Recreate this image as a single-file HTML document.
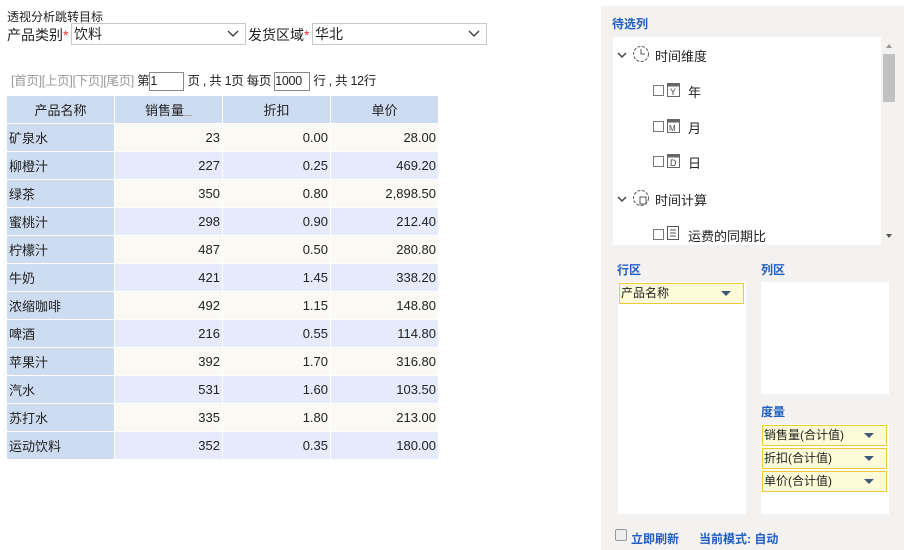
<!DOCTYPE html>
<html><head><meta charset="utf-8"><style>
*{margin:0;padding:0;box-sizing:border-box}
body{width:904px;height:550px;background:#fff;font-family:"Liberation Sans","Noto Sans CJK SC",sans-serif;font-size:13px;color:#222;position:relative;overflow:hidden}
.a{position:absolute}
.sel{position:absolute;height:22px;border:1px solid #c8c8c8;background:#fff;font-size:14px;line-height:20px;padding-left:2px}
.sel svg{position:absolute;right:6px;top:6px}
table{position:absolute;left:6px;top:95px;border-collapse:separate;border-spacing:1px;background:#fff}
td{height:27px;width:107px;font-size:13px;padding:0 2px;text-align:right;vertical-align:middle}
th{height:27px;width:107px;background:#cddcf0;font-weight:normal;font-size:13px}
td.n{background:#cddcf0;text-align:left}
tr.o td{background:#faf9f4}tr.e td{background:#e6ebfb}
tr td.n{background:#cddcf0}
.panel{position:absolute;left:601px;top:6px;width:303px;height:544px;background:#f3f2f0}
.blue{color:#1f5fc4;font-size:12px;font-weight:bold}
.box{position:absolute;background:#fff}
.chip{position:absolute;height:21px;background:#fefbd8;border:1px solid #f0c93a;font-size:12px;line-height:19px;padding-left:1px}
.tri{position:absolute;right:12px;top:7px;width:0;height:0;border-left:5px solid transparent;border-right:5px solid transparent;border-top:5px solid #3e5a7a}
.cb{position:absolute;width:11px;height:11px;border:1px solid #777;background:#fff}
.it{position:absolute;font-size:13px}
</style></head><body>
<div class="a" style="left:7px;top:8px;font-size:12px">透视分析跳转目标</div>
<div class="a" style="left:7px;top:25px;font-size:14px">产品类别<span style="color:#e33">*</span></div>
<div class="sel" style="left:71px;top:23px;width:175px">饮料<svg width="12" height="8"><path d="M1 1l5 5 5-5" stroke="#333" fill="none" stroke-width="1.3"/></svg></div>
<div class="a" style="left:248px;top:25px;font-size:14px">发货区域<span style="color:#e33">*</span></div>
<div class="sel" style="left:312px;top:23px;width:175px">华北<svg width="12" height="8"><path d="M1 1l5 5 5-5" stroke="#333" fill="none" stroke-width="1.3"/></svg></div>
<div class="a" style="left:11px;top:70px;font-size:12.5px;white-space:nowrap;letter-spacing:-0.3px"><span style="color:#999">[首页][上页][下页][尾页]</span> 第<span style="display:inline-block;width:35px;height:19px;border:1px solid #888;vertical-align:middle;line-height:17px">1</span> 页 , 共 1页 每页 <span style="display:inline-block;width:36px;height:19px;border:1px solid #888;vertical-align:middle;line-height:17px">1000</span> 行 , 共 12行</div>
<table>
<tr><th>产品名称</th><th>销售量<span style="font-size:8px;color:#aaa">▁</span></th><th>折扣</th><th>单价</th></tr>
<tr class="o"><td class="n">矿泉水</td><td>23</td><td>0.00</td><td>28.00</td></tr>
<tr class="e"><td class="n">柳橙汁</td><td>227</td><td>0.25</td><td>469.20</td></tr>
<tr class="o"><td class="n">绿茶</td><td>350</td><td>0.80</td><td>2,898.50</td></tr>
<tr class="e"><td class="n">蜜桃汁</td><td>298</td><td>0.90</td><td>212.40</td></tr>
<tr class="o"><td class="n">柠檬汁</td><td>487</td><td>0.50</td><td>280.80</td></tr>
<tr class="e"><td class="n">牛奶</td><td>421</td><td>1.45</td><td>338.20</td></tr>
<tr class="o"><td class="n">浓缩咖啡</td><td>492</td><td>1.15</td><td>148.80</td></tr>
<tr class="e"><td class="n">啤酒</td><td>216</td><td>0.55</td><td>114.80</td></tr>
<tr class="o"><td class="n">苹果汁</td><td>392</td><td>1.70</td><td>316.80</td></tr>
<tr class="e"><td class="n">汽水</td><td>531</td><td>1.60</td><td>103.50</td></tr>
<tr class="o"><td class="n">苏打水</td><td>335</td><td>1.80</td><td>213.00</td></tr>
<tr class="e"><td class="n">运动饮料</td><td>352</td><td>0.35</td><td>180.00</td></tr>
</table>
<div class="panel"></div>
<div class="a blue" style="left:612px;top:15px">待选列</div>
<div class="box" style="left:613px;top:37px;width:268px;height:208px"></div>
<div class="box" style="left:881px;top:37px;width:14px;height:208px;background:#f3f2f0"></div>
<div class="a" style="left:883px;top:54px;width:12px;height:48px;background:#c1c1c1"></div>
<div class="a" style="left:886px;top:44px;border-left:3px solid transparent;border-right:3px solid transparent;border-bottom:4px solid #999"></div>
<div class="a" style="left:886px;top:234px;border-left:3px solid transparent;border-right:3px solid transparent;border-top:4px solid #555"></div>
<svg class="a" style="left:617px;top:51px" width="10" height="8"><path d="M1 2l4 4 4-4" stroke="#444" fill="none" stroke-width="1.5"/></svg>
<svg class="a" style="left:632px;top:45px" width="18" height="18"><circle cx="9" cy="9" r="7.5" stroke="#555" fill="none" stroke-dasharray="3 1.5"/><path d="M9 4v5h4" stroke="#555" fill="none"/></svg>
<div class="it" style="left:655px;top:46px">时间维度</div>
<div class="cb" style="left:653px;top:85px"></div><svg class="a" style="left:667px;top:82px" width="13" height="15"><rect x=".5" y="1.5" width="12" height="13" fill="#fff" stroke="#666"/><rect x=".5" y="1.5" width="12" height="3" fill="#666"/><text x="3" y="13" font-size="9" font-family="Liberation Sans" fill="#444">Y</text></svg>
<div class="it" style="left:688px;top:82px">年</div>
<div class="cb" style="left:653px;top:121px"></div><svg class="a" style="left:667px;top:118px" width="13" height="15"><rect x=".5" y="1.5" width="12" height="13" fill="#fff" stroke="#666"/><rect x=".5" y="1.5" width="12" height="3" fill="#666"/><text x="2" y="13" font-size="8" font-family="Liberation Sans" fill="#444">M</text></svg>
<div class="it" style="left:688px;top:118px">月</div>
<div class="cb" style="left:653px;top:156px"></div><svg class="a" style="left:667px;top:153px" width="13" height="15"><rect x=".5" y="1.5" width="12" height="13" fill="#fff" stroke="#666"/><rect x=".5" y="1.5" width="12" height="3" fill="#666"/><text x="3" y="13" font-size="9" font-family="Liberation Sans" fill="#444">D</text></svg>
<div class="it" style="left:688px;top:153px">日</div>
<svg class="a" style="left:617px;top:195px" width="10" height="8"><path d="M1 2l4 4 4-4" stroke="#444" fill="none" stroke-width="1.5"/></svg>
<svg class="a" style="left:632px;top:189px" width="18" height="18"><circle cx="9" cy="9" r="7.5" stroke="#555" fill="none" stroke-dasharray="3 1.5"/><rect x="8" y="8" width="6" height="7" fill="#fff" stroke="#555"/></svg>
<div class="it" style="left:655px;top:190px">时间计算</div>
<div class="cb" style="left:653px;top:229px"></div><svg class="a" style="left:667px;top:226px" width="12" height="14"><rect x=".5" y=".5" width="11" height="13" fill="#fff" stroke="#555"/><path d="M3 4h6M3 7h6M3 10h6" stroke="#555"/></svg>
<div class="it" style="left:688px;top:226px">运费的同期比</div>
<div class="a blue" style="left:617px;top:261px">行区</div>
<div class="a blue" style="left:761px;top:261px">列区</div>
<div class="box" style="left:618px;top:282px;width:128px;height:232px"></div>
<div class="box" style="left:761px;top:282px;width:128px;height:112px"></div>
<div class="chip" style="left:619px;top:283px;width:125px">产品名称<span class="tri"></span></div>
<div class="a blue" style="left:761px;top:403px">度量</div>
<div class="box" style="left:761px;top:424px;width:128px;height:90px"></div>
<div class="chip" style="left:762px;top:425px;width:125px">销售量(合计值)<span class="tri"></span></div>
<div class="chip" style="left:762px;top:448px;width:125px">折扣(合计值)<span class="tri"></span></div>
<div class="chip" style="left:762px;top:471px;width:125px">单价(合计值)<span class="tri"></span></div>
<div class="a" style="left:615px;top:529px;width:12px;height:12px;border:1px solid #999;border-radius:2px;background:#eee"></div>
<div class="a blue" style="left:631px;top:530px">立即刷新</div>
<div class="a blue" style="left:699px;top:530px">当前模式: 自动</div>
</body></html>
